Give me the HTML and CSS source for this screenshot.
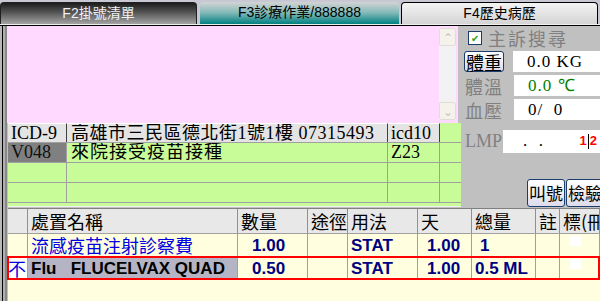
FILE: index.html
```html
<!DOCTYPE html>
<html lang="zh-Hant">
<head>
<meta charset="UTF-8">
<title>診療作業</title>
<link rel="stylesheet" href="styles.css">
</head>
<body>
    <div class="tabs">
        <div class="tab tab-f2">F2掛號清單</div>
        <div class="tab tab-f3">F3診療作業/888888</div>
        <div class="tab tab-f4">F4歷史病歷</div>
    </div>
    <div class="work">
        <div class="edge"></div>
        <div class="content">
            <div class="upper">
                <div class="left">
                    <div class="notes">
                        <div class="scroll">
                            <div class="arrow">&#8963;</div>
                            <div class="arrow">&#8964;</div>
                        </div>
                    </div>
                    <div class="diag">
                        <div class="drow">
                            <div class="dc c-icd head">ICD-9</div>
                            <div class="dc c-addr head">高雄市三民區德北街1號1樓 07315493</div>
                            <div class="dc c-i10 head">icd10</div>
                            <div class="dc c-x"></div>
                        </div>
                        <div class="drow">
                            <div class="dc c-icd code">V048</div>
                            <div class="dc c-addr">來院接受疫苗接種</div>
                            <div class="dc c-i10">Z23</div>
                            <div class="dc c-x"></div>
                        </div>
                        <div class="drow">
                            <div class="dc c-icd"></div>
                            <div class="dc c-addr"></div>
                            <div class="dc c-i10"></div>
                            <div class="dc c-x"></div>
                        </div>
                        <div class="drow">
                            <div class="dc c-icd"></div>
                            <div class="dc c-addr"></div>
                            <div class="dc c-i10"></div>
                            <div class="dc c-x"></div>
                        </div>
                        <div class="dfoot"></div>
                    </div>
                </div>
                <div class="vitals">
                    <div class="search">
                        <span class="check">&#10004;</span>
                        <span class="search-label">主訴搜尋</span>
                    </div>
                    <div class="vrow">
                        <button class="btn btn-weight" type="button">體重</button>
                        <div class="field">0.0 KG</div>
                    </div>
                    <div class="vrow">
                        <span class="vlabel">體溫</span>
                        <div class="field green">0.0 ℃</div>
                    </div>
                    <div class="vrow">
                        <span class="vlabel">血壓</span>
                        <div class="field">0/&nbsp; 0</div>
                    </div>
                    <div class="vrow lmp">
                        <span class="vlabel lmp-label">LMP</span>
                        <div class="field lmp-field"><span class="dots">.&nbsp;&nbsp;.</span><span class="caret">1<i></i>2</span></div>
                    </div>
                    <div class="actions">
                        <button class="btn" type="button">叫號</button>
                        <button class="btn" type="button">檢驗</button>
                    </div>
                </div>
            </div>
            <div class="orders">
                <div class="orow ohead">
                    <div></div>
                    <div>處置名稱</div>
                    <div>數量</div>
                    <div>途徑</div>
                    <div>用法</div>
                    <div>天</div>
                    <div>總量</div>
                    <div>註</div>
                    <div>標(冊</div>
                </div>
                <div class="orow">
                    <div></div>
                    <div class="name">流感疫苗注射診察費</div>
                    <div class="val qty">1.00</div>
                    <div></div>
                    <div class="val">STAT</div>
                    <div class="val days">1.00</div>
                    <div class="val total">1</div>
                    <div></div>
                    <div><span class="box"></span></div>
                </div>
                <div class="orow selected">
                    <div class="flag">不</div>
                    <div class="name sel-name">Flu&nbsp;&nbsp; FLUCELVAX QUAD</div>
                    <div class="val qty">0.50</div>
                    <div></div>
                    <div class="val">STAT</div>
                    <div class="val days">1.00</div>
                    <div class="val">0.5 ML</div>
                    <div></div>
                    <div><span class="box"></span></div>
                </div>
            </div>
        </div>
    </div>
</body>
</html>
```

FILE: styles.css
```css
body {
    margin: 0;
    width: 600px;
    height: 301px;
    overflow: hidden;
    background-color: #c0c0c0;
    font-family: "Noto Sans CJK TC", sans-serif;
}
.tabs {
    display: flex;
    height: 22px;
    padding-top: 2px;
    background-color: #c8c8d4;
    border-bottom: 1px solid #f0f0f0;
}
.tab {
    box-sizing: border-box;
    height: 22px;
    font-family: "Liberation Sans", "Noto Sans CJK TC", sans-serif;
    font-size: 14px;
    line-height: 21px;
    text-align: center;
    border-radius: 4px 4px 0 0;
}
.tab-f2 {
    width: 197px;
    margin-right: 3px;
    color: #f0f0f0;
    background: linear-gradient(#1c1c1c, #555 45%, #a4a4a4);
    border: 1px solid #202020;
    border-bottom: none;
}
.tab-f3 {
    width: 199px;
    margin-right: 2px;
    color: #000;
    background: linear-gradient(#d4d4d4, #80b8b8 50%, #008080);
}
.tab-f4 {
    width: 197px;
    color: #000;
    background: linear-gradient(#f4f4f4, #d4d4d4);
    border: 1px solid #000;
    border-bottom: none;
}
.work {
    display: flex;
    height: 276px;
    border-top: 1px solid #000;
}
.edge {
    width: 7px;
    flex-shrink: 0;
    background: linear-gradient(90deg, #b8b8b8 0 2px, #000 2px 3px, #b0b0b0 3px 5px, #888 5px 7px);
}
.content {
    flex: 1;
    display: flex;
    flex-direction: column;
}
.upper {
    display: flex;
    height: 182px;
}
.left {
    width: 451px;
    flex-shrink: 0;
}
.notes {
    height: 97px;
    background-color: #ffd9ff;
    display: flex;
    justify-content: flex-end;
    padding: 2px 2px 0 0;
    box-sizing: border-box;
}
.scroll {
    width: 17px;
    height: 92px;
    background-color: #f2f2f4;
    display: flex;
    flex-direction: column;
    justify-content: space-between;
}
.arrow {
    height: 16px;
    border: 1px solid #e0ddd4;
    border-radius: 2px;
    background-color: #f4f2ea;
    color: #c8c4b8;
    font-size: 12px;
    line-height: 16px;
    text-align: center;
}
.diag {
    width: 453px;
    margin-left: 1px;
    background-color: #c8fc98;
}
.drow {
    display: flex;
    height: 19px;
    border-bottom: 1px solid #a0a0a0;
}
.dc {
    box-sizing: border-box;
    height: 19px;
    border-right: 1px solid #a0a0a0;
    font-family: "Liberation Serif", "Noto Sans CJK TC", serif;
    font-size: 18px;
    line-height: 19px;
    padding-left: 3px;
    white-space: nowrap;
    overflow: hidden;
}
.c-icd { width: 59px; }
.c-addr { width: 321px; padding-left: 4px; letter-spacing: 1px; }
.c-i10 { width: 52px; }
.c-x { width: 21px; border-right: none; }
.head {
    background-color: #e4e4e4;
    border-top: 1px solid #fff;
    border-right: 1px solid #404040;
}
.c-addr.head {
    letter-spacing: 0.5px;
}
.code {
    background-color: #808080;
    color: #101010;
}
.dfoot {
    height: 3px;
    border-bottom: 1px solid #f0f0f0;
}
.vitals {
    flex: 1;
    padding-left: 6px;
}
.search {
    display: flex;
    align-items: center;
    height: 20px;
    margin-top: 2px;
    padding-left: 4px;
}
.check {
    box-sizing: border-box;
    width: 14px;
    height: 14px;
    border: 1px solid #1c3c6c;
    background-color: #fff;
    color: #22a022;
    font-size: 10px;
    line-height: 12px;
    text-align: center;
}
.search-label {
    margin-left: 6px;
    font-family: "Liberation Serif", "Noto Sans CJK TC", serif;
    font-size: 18px;
    letter-spacing: 2px;
    color: #808080;
}
.vrow {
    display: flex;
    align-items: center;
    height: 21px;
    margin-top: 3px;
}
.btn {
    box-sizing: border-box;
    height: 21px;
    padding: 0 1px;
    border: 1px solid #1c3c6c;
    border-radius: 3px;
    background: linear-gradient(#fff, #dcdcec);
    font-family: "Noto Sans CJK TC", sans-serif;
    font-size: 18px;
    line-height: 18px;
    color: #000;
}
.btn-weight {
    width: 40px;
    margin-right: 9px;
}
.vlabel {
    width: 49px;
    padding-left: 1px;
    font-size: 18px;
    letter-spacing: 1px;
    color: #808080;
}
.field {
    flex: 1;
    height: 21px;
    background-color: #fff;
    padding-left: 14px;
    font-family: "Liberation Serif", serif;
    font-size: 17px;
    line-height: 21px;
    letter-spacing: 1px;
}
.green {
    color: #008000;
}
.lmp {
    margin-top: 10px;
    height: 23px;
}
.lmp-label {
    width: 38px;
    font-family: "Liberation Serif", serif;
    letter-spacing: 0;
}
.lmp-field {
    height: 23px;
    display: flex;
    justify-content: space-between;
    padding-right: 3px;
}
.dots {
    padding-left: 6px;
}
.caret {
    color: #f00;
    font-family: "Liberation Sans", sans-serif;
    font-weight: bold;
    font-size: 13px;
    letter-spacing: 0;
}
.caret i {
    display: inline-block;
    width: 1px;
    height: 15px;
    margin: 0 1px;
    vertical-align: middle;
    background-color: #000;
}
.actions {
    display: flex;
    justify-content: flex-end;
    margin-top: 26px;
    margin-right: -4px;
    gap: 1px;
}
.actions .btn {
    height: 28px;
    width: 38px;
    padding: 0;
    font-size: 17px;
}
.orders {
    flex: 1;
    margin-left: 1px;
    background-color: #ffffe0;
    border-top: 1px solid #808080;
}
.orow {
    position: relative;
    display: grid;
    grid-template-columns: 20px 210px 70px 40px 70px 54px 64px 24px 40px;
    height: 23px;
    font-size: 18px;
    line-height: 23px;
}
.orow > div {
    border-right: 1px solid #a0a0a0;
    white-space: nowrap;
    overflow: hidden;
    padding-left: 3px;
}
.ohead {
    height: 24px;
    background-color: #e8e8e8;
    border-bottom: 1px solid #a0a0a0;
}
.ohead > div {
    border-right: 1px solid #909090;
    line-height: 24px;
}
.name {
    color: #0000e0;
}
.val {
    color: #000080;
    font-family: "Liberation Sans", sans-serif;
    font-size: 17px;
    font-weight: bold;
}
.orow > .qty {
    padding-left: 14px;
}
.orow > .days {
    padding-left: 9px;
}
.orow > .total {
    padding-left: 8px;
}
.box {
    display: inline-block;
    width: 11px;
    height: 10px;
    margin: 2px 0 0 7px;
    background-color: #fff;
    vertical-align: top;
}
.flag {
    background-color: #fff;
    color: #0000e0;
    padding-left: 0 !important;
}
.sel-name {
    background-color: #b4b4c4;
    color: #000;
    font-family: "Liberation Sans", sans-serif;
    font-size: 17px;
    font-weight: bold;
}
.selected::after {
    content: "";
    position: absolute;
    left: -1px;
    right: 0;
    top: -1px;
    bottom: 0;
    border: 2px solid #f00;
    pointer-events: none;
}
```
